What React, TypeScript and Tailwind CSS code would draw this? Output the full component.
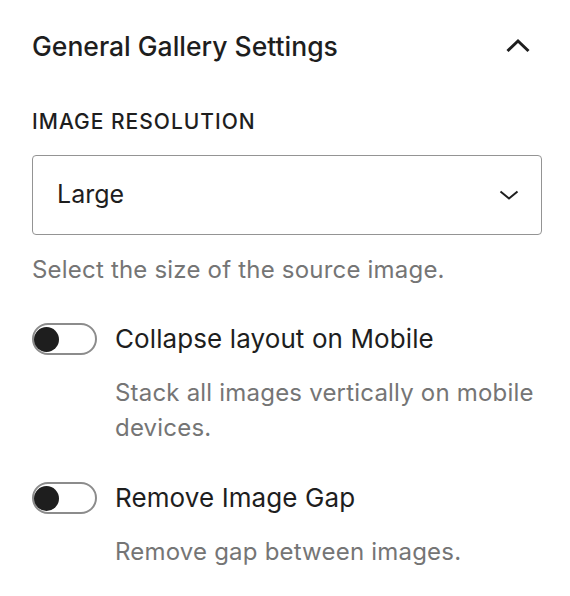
function Toggle() {
  return (
    <div className="flex items-center w-[65px] h-[32px] shrink-0 rounded-full border-2 border-[#8c8c8c] bg-white pl-[0px]">
      <div className="w-[25px] h-[25px] rounded-full bg-[#1e1e1e]" />
    </div>
  );
}

function ToggleField({ label, help }: { label: string; help: string }) {
  return (
    <div className="flex flex-col">
      <div className="flex items-center gap-[18px] h-[32px]">
        <Toggle />
        <span className="text-[26px] leading-[32px] tracking-[0.1px] text-[#1e1e1e]">{label}</span>
      </div>
      <p className="mt-[20px] pl-[83px] text-[24px] leading-[35px] tracking-[0.2px] text-[#757575]">{help}</p>
    </div>
  );
}

export default function App() {
  return (
    <div className="w-[570px] h-[596px] bg-white font-['Inter','Liberation_Sans',sans-serif] pl-[32px] pr-[28px] pt-[30px]">
      {/* PANEL HEADER */}
      <div className="flex items-center justify-between h-[32px]">
        <h2 className="text-[26.5px] leading-[32px] font-medium text-[#1e1e1e]">General Gallery Settings</h2>
        <svg width="24" height="24" viewBox="0 0 24 24" className="mr-[12px]" fill="none" stroke="#1e1e1e" strokeWidth="3">
          <path d="M1.5 17 L12 7 L22.5 17" />
        </svg>
      </div>

      {/* IMAGE RESOLUTION */}
      <div className="mt-[48px] text-[21px] leading-[24px] font-medium uppercase tracking-[1px] text-[#1e1e1e]">Image Resolution</div>
      <div className="mt-[21px] h-[80px] flex items-center justify-between rounded-[4px] border-[1.5px] border-[#949494] pl-[24px] pr-[22px]">
        <span className="text-[25px] text-[#1e1e1e]">Large</span>
        <svg width="20" height="20" viewBox="0 0 20 20" fill="none" stroke="#1e1e1e" strokeWidth="2">
          <path d="M1.5 6.5 L10 13.5 L18.5 6.5" />
        </svg>
      </div>
      <p className="mt-[20px] text-[24px] leading-[30px] tracking-[0.2px] text-[#757575]">Select the size of the source image.</p>

      {/* TOGGLES */}
      <div className="mt-[38px]">
        <ToggleField label="Collapse layout on Mobile" help="Stack all images vertically on mobile devices." />
      </div>
      <div className="mt-[37px]">
        <ToggleField label="Remove Image Gap" help="Remove gap between images." />
      </div>
    </div>
  );
}
